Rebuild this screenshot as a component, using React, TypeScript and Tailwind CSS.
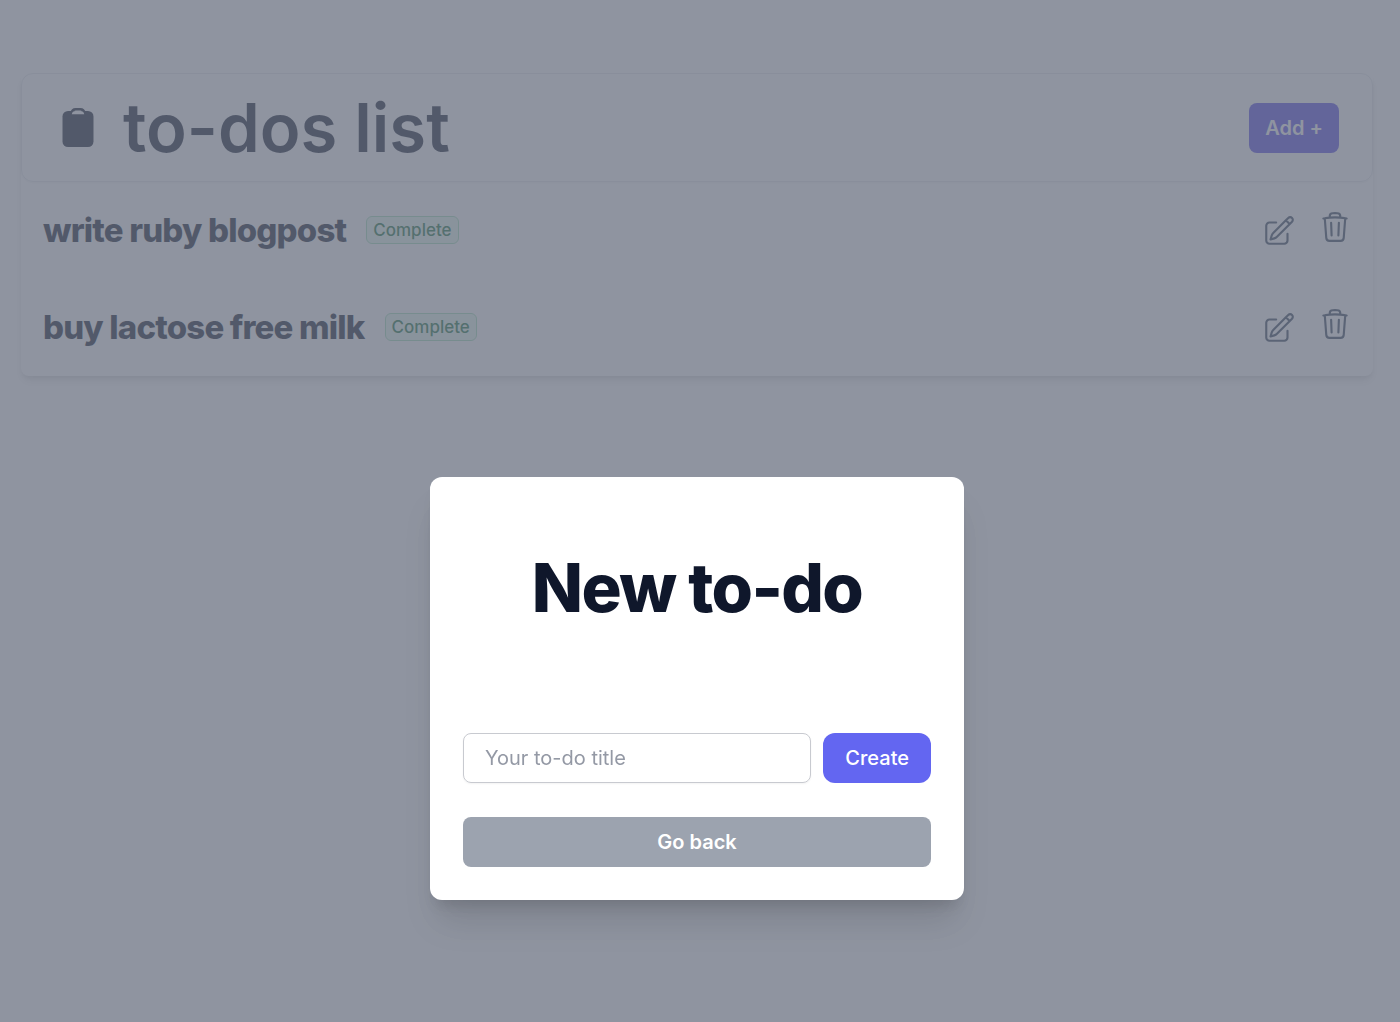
import React, { useState } from 'react';
import { HiOutlinePencilSquare, HiOutlineTrash } from 'react-icons/hi2';

interface Todo {
  id: number;
  title: string;
  status: string;
}

const todos: Todo[] = [
  { id: 1, title: 'write ruby blogpost', status: 'Complete' },
  { id: 2, title: 'buy lactose free milk', status: 'Complete' },
];

const ClipboardIcon = () => (
  <svg viewBox="0 0 32 40" className="w-8 h-10" fill="none" aria-hidden="true">
    <rect x="0.5" y="3" width="31" height="36" rx="5.5" fill="#0f172a" />
    <path d="M9.500 5C10 2.500 11.500 1.300 13.500 1.300h5c2 0 3.500 1.200 4 3.700" stroke="#0f172a" strokeWidth="2.500" />
    <path d="M9.800 6.200c.3-2.200 1.800-3.200 3.700-3.200h5c1.900 0 3.400 1 3.700 3.200z" fill="#fff" />
  </svg>
);

const TodoRow = ({ todo }: { todo: Todo }) => (
  <li className="flex items-center justify-between h-[97px] pl-[22px] pr-[21px]">
    <div className="flex items-center gap-5 pb-0.5">
      <h2 className="text-[33px] leading-10 font-extrabold tracking-tight text-slate-900">{todo.title}</h2>
      <span className="rounded-md border border-[#a0deb6] bg-[#e8fcef] px-[6px] text-[17px] leading-[26px] font-medium text-[#15703d]">
        {todo.status}
      </span>
    </div>
    <div className="flex items-start gap-[22px] pb-1 text-slate-700">
      <button type="button" aria-label="Edit" className="pt-1">
        <HiOutlinePencilSquare className="w-[34px] h-[34px]" />
      </button>
      <button type="button" aria-label="Delete">
        <HiOutlineTrash className="w-[34px] h-[34px]" />
      </button>
    </div>
  </li>
);

const App: React.FC = () => {
  const [open, setOpen] = useState(true);
  const [title, setTitle] = useState('');

  return (
    <div className="min-h-screen bg-white font-['Inter',sans-serif] antialiased">
      <main className="pt-[73px] pl-[21px] pr-[27px]">
        <div className="rounded-lg shadow-[0_6px_8px_-1px_rgba(0,0,0,0.1),0_3px_5px_-2px_rgba(0,0,0,0.1)]">
          {/* Header */}
          <header className="flex items-center justify-between h-[109px] rounded-xl border border-gray-200 pl-10 pr-[33px] shadow-xs">
            <div className="flex items-center gap-[29px]">
              <ClipboardIcon />
              <h1 className="text-[67px] leading-[67px] font-semibold text-slate-900">to-dos list</h1>
            </div>
            <button
              type="button"
              onClick={() => setOpen(true)}
              className="h-[50px] rounded-lg bg-[#4f46e5] px-4 text-[20px] font-semibold text-white"
            >
              Add +
            </button>
          </header>

          {/* Items */}
          <ul>
            {todos.map((todo) => (
              <TodoRow key={todo.id} todo={todo} />
            ))}
          </ul>
        </div>
      </main>

      {/* New to-do dialog */}
      {open && (
        <div className="fixed inset-0 flex items-end justify-center bg-[#6a7080]/75 pr-[6px] pb-[122px]">
          <div role="dialog" aria-modal="true" aria-labelledby="dialog-title" className="w-full max-w-[534px] rounded-xl bg-white p-[33px] shadow-[0_28px_35px_-7px_rgba(0,0,0,0.12),0_11px_14px_-6px_rgba(0,0,0,0.12)]">
            <h2 id="dialog-title" className="pt-11 text-center text-[67px] leading-[67px] font-extrabold tracking-tight text-slate-900">
              New to-do
            </h2>
            <form className="mt-28 flex gap-3" onSubmit={(e) => e.preventDefault()}>
              <input
                type="text"
                aria-label="To-do title"
                placeholder="Your to-do title"
                value={title}
                onChange={(e) => setTitle(e.target.value)}
                className="h-[50px] min-w-0 flex-1 rounded-lg border border-[#c8cad0] px-[21px] text-[20px] text-slate-900 shadow-xs outline-none placeholder:text-[#9499a5]"
              />
              <button type="submit" className="h-[50px] rounded-xl bg-[#6366f1] px-[22px] text-[20px] font-medium text-white">
                Create
              </button>
            </form>
            <button
              type="button"
              onClick={() => setOpen(false)}
              className="mt-[34px] h-[50px] w-full rounded-lg bg-[#9ca3af] text-[20px] font-semibold text-white"
            >
              Go back
            </button>
          </div>
        </div>
      )}
    </div>
  );
};

export default App;
